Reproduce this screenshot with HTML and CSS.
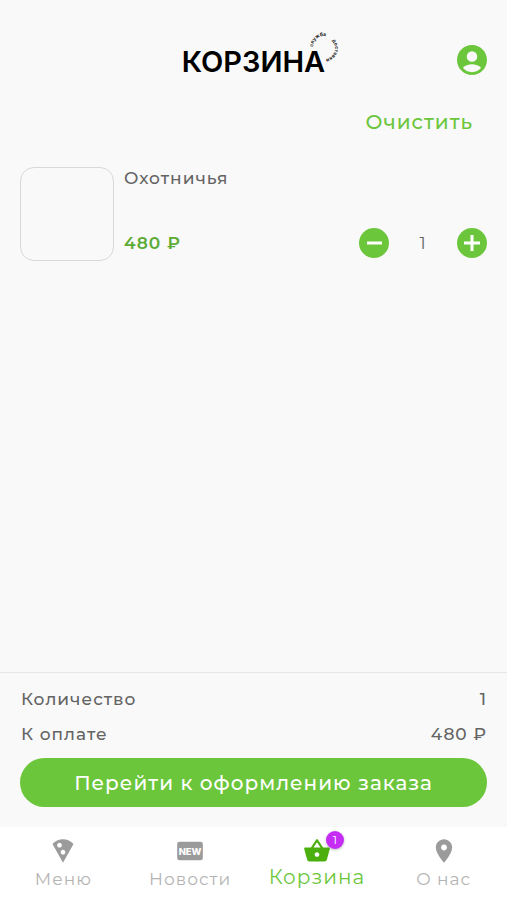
FILE: index.html
```html
<!DOCTYPE html>
<html lang="ru">
<head>
<meta charset="utf-8">
<meta name="viewport" content="width=device-width, initial-scale=1">
<title>Корзина</title>
<link rel="stylesheet" href="styles.css">
</head>
<body>
<header class="header">
  <h1 class="logo">КОРЗИНА
    <svg class="logo-ring" viewBox="0 0 36 36" aria-hidden="true">
      <path id="ring-left" d="M7 17A11 11 0 0 1 29 17" fill="none"/>
      <path id="ring-right" d="M26 10.500A11 11 0 0 1 14 28.300" fill="none"/>
      <text class="ring-text"><textPath href="#ring-left">служба</textPath></text>
      <text class="ring-text"><textPath href="#ring-right">доставки</textPath></text>
    </svg>
  </h1>
  <button class="icon-button profile" type="button" aria-label="Профиль">
    <svg class="round-icon" viewBox="2 2 20 20"><path d="M12 2C6.480 2 2 6.480 2 12s4.480 10 10 10 10-4.480 10-10S17.520 2 12 2zm0 4.200a3.500 3.500 0 1 1 0 7 3.500 3.500 0 0 1 0-7zm0 13.900c-2.500 0-4.700-1.100-6.100-2.900 1.200-1.500 4-2.300 6.100-2.300s4.900.8 6.100 2.300c-1.400 1.800-3.600 2.900-6.100 2.900z"/></svg>
  </button>
</header>
<main class="main">
  <button class="clear" type="button">Очистить</button>
  <article class="item">
    <div class="thumb"></div>
    <div class="item-body">
      <h2 class="item-name">Охотничья</h2>
      <div class="item-foot">
        <span class="price">480 ₽</span>
        <div class="stepper">
          <button class="icon-button" type="button" aria-label="Меньше">
            <svg class="round-icon" viewBox="0 0 30 30"><circle cx="15" cy="15" r="15"/><path class="sign" d="M8 15h15"/></svg>
          </button>
          <span class="count">1</span>
          <button class="icon-button" type="button" aria-label="Больше">
            <svg class="round-icon" viewBox="0 0 30 30"><circle cx="15" cy="15" r="15"/><path class="sign" d="M7 15h16M15 7v16"/></svg>
          </button>
        </div>
      </div>
    </div>
  </article>
</main>
<section class="summary">
  <dl class="totals">
    <div class="total-row"><dt>Количество</dt><dd>1</dd></div>
    <div class="total-row"><dt>К оплате</dt><dd>480 ₽</dd></div>
  </dl>
  <button class="checkout" type="button">Перейти к оформлению заказа</button>
</section>
<nav class="tabs">
  <a class="tab" href="#menu">
    <svg class="tab-icon" viewBox="0 0 24 24"><path d="M12 2C8.430 2 5.230 3.540 3.010 6L12 22l8.990-16C18.780 3.550 15.570 2 12 2zM7 7c0-1.100.9-2 2-2s2 .9 2 2-.9 2-2 2-2-.9-2-2zm5 8c-1.100 0-2-.9-2-2s.9-2 2-2 2 .9 2 2-.9 2-2 2z"/></svg>
    <span>Меню</span>
  </a>
  <a class="tab" href="#news">
    <svg class="tab-icon" viewBox="0 0 24 24"><rect x="1" y="4" width="22" height="16" rx="2"/><text class="new-text" x="12" y="15" text-anchor="middle">NEW</text></svg>
    <span>Новости</span>
  </a>
  <a class="tab active" href="#cart" aria-current="page">
    <span class="icon-wrap">
      <svg class="tab-icon" viewBox="0 0 24 24"><path d="M17.210 9l-4.380-6.560c-.19-.28-.51-.42-.83-.42-.32 0-.64.14-.83.43L6.790 9H2c-.55 0-1 .45-1 1 0 .09.01.18.04.27l2.540 9.270c.23.84 1 1.460 1.920 1.460h13c.92 0 1.690-.62 1.930-1.460l2.540-9.270L23 10c0-.55-.45-1-1-1h-4.790zM9 9l3-4.400L15 9H9zm3 8c-1.100 0-2-.9-2-2s.9-2 2-2 2 .9 2 2-.9 2-2 2z"/></svg>
      <span class="badge">1</span>
    </span>
    <span>Корзина</span>
  </a>
  <a class="tab" href="#about">
    <svg class="tab-icon" viewBox="0 0 24 24"><path d="M12 2C8.130 2 5 5.130 5 9c0 5.250 7 13 7 13s7-7.750 7-13c0-3.870-3.130-7-7-7zm0 9.500c-1.380 0-2.500-1.120-2.500-2.500s1.120-2.500 2.500-2.500 2.500 1.120 2.500 2.500-1.120 2.500-2.500 2.500z"/></svg>
    <span>О нас</span>
  </a>
</nav>
</body>
</html>
```
FILE: styles.css
```css
* {
  box-sizing: border-box;
}

body {
  margin: 0;
  min-height: 100vh;
  display: flex;
  flex-direction: column;
  background: #f9f9f9;
  color: #646464;
  font-family: Montserrat, Inter, sans-serif;
  font-size: 17px;
  line-height: 24px;
  letter-spacing: 1px;
}

h1, h2, dl, dd {
  margin: 0;
}

button {
  padding: 0;
  border: 0;
  background: none;
  font: inherit;
  letter-spacing: inherit;
  cursor: pointer;
}

.header {
  display: grid;
  grid-template-columns: 1fr auto 1fr;
  align-items: center;
  padding: 38px 20px 0;
}

.logo {
  grid-column: 2;
  position: relative;
  padding-top: 4px;
  color: #000;
  font-family: Inter, sans-serif;
  font-size: 29px;
  line-height: 40px;
  font-weight: 600;
  letter-spacing: 0;
}

.logo-ring {
  position: absolute;
  top: -8px;
  right: -17px;
  width: 36px;
  height: 36px;
}

.ring-text {
  font-size: 5px;
  font-weight: 700;
  fill: #222;
}

.icon-button {
  display: block;
  width: 30px;
  height: 30px;
}

.profile {
  justify-self: end;
}

.round-icon {
  display: block;
  width: 100%;
  height: 100%;
  fill: #6cc63c;
}

.sign {
  stroke: #fff;
  stroke-width: 3;
}

.main {
  flex: 1;
  display: flex;
  flex-direction: column;
  padding: 22px 20px;
}

.clear {
  align-self: flex-end;
  padding: 6px 14px;
  color: #6cc63c;
  font-size: 20px;
  font-weight: 500;
}

.item {
  display: flex;
  gap: 10px;
  margin-top: 27px;
}

.thumb {
  width: 94px;
  height: 94px;
  border: 1px solid #d8d8d8;
  border-radius: 14px;
}

.item-body {
  flex: 1;
  display: flex;
  flex-direction: column;
  justify-content: space-between;
  padding-bottom: 3px;
}

.item-name {
  font-size: 17px;
  line-height: 22px;
  font-weight: 500;
}

.item-foot {
  display: flex;
  align-items: center;
  justify-content: space-between;
}

.price {
  color: #5bab35;
  font-weight: 600;
}

.stepper {
  display: flex;
  align-items: center;
}

.count {
  width: 68px;
  text-align: center;
}

.summary {
  padding: 14px 20px 20px;
  border-top: 1px solid #e6e6e6;
}

.totals {
  padding-bottom: 1px;
}

.total-row {
  display: flex;
  justify-content: space-between;
  margin-bottom: 11px;
  padding-left: 1px;
  font-weight: 500;
}

.checkout {
  width: 100%;
  height: 49px;
  border-radius: 25px;
  background: #6cc63c;
  color: #fff;
  font-size: 20px;
  font-weight: 500;
}

.tabs {
  display: grid;
  grid-template-columns: repeat(4, 1fr);
  padding: 10px 0 9px;
  background: #fff;
}

.tab {
  display: flex;
  flex-direction: column;
  align-items: center;
  gap: 2px;
  color: #b4b4b4;
  text-decoration: none;
}

.tab-icon {
  display: block;
  width: 28px;
  height: 28px;
  fill: #9b9b9b;
}

.new-text {
  fill: #fff;
  font-family: Inter, sans-serif;
  font-size: 8px;
  font-weight: 800;
  letter-spacing: 0;
}

.active {
  gap: 0;
  color: #6cc63c;
  font-size: 20px;
}

.active .tab-icon {
  fill: #4bb00e;
}

.icon-wrap {
  position: relative;
}

.badge {
  position: absolute;
  top: -6px;
  right: -13px;
  width: 18px;
  height: 18px;
  border-radius: 50%;
  background: #c52df5;
  box-shadow: 0 1px 3px #0004;
  color: #fff;
  font-size: 12px;
  line-height: 18px;
  letter-spacing: 0;
  text-align: center;
}
```
